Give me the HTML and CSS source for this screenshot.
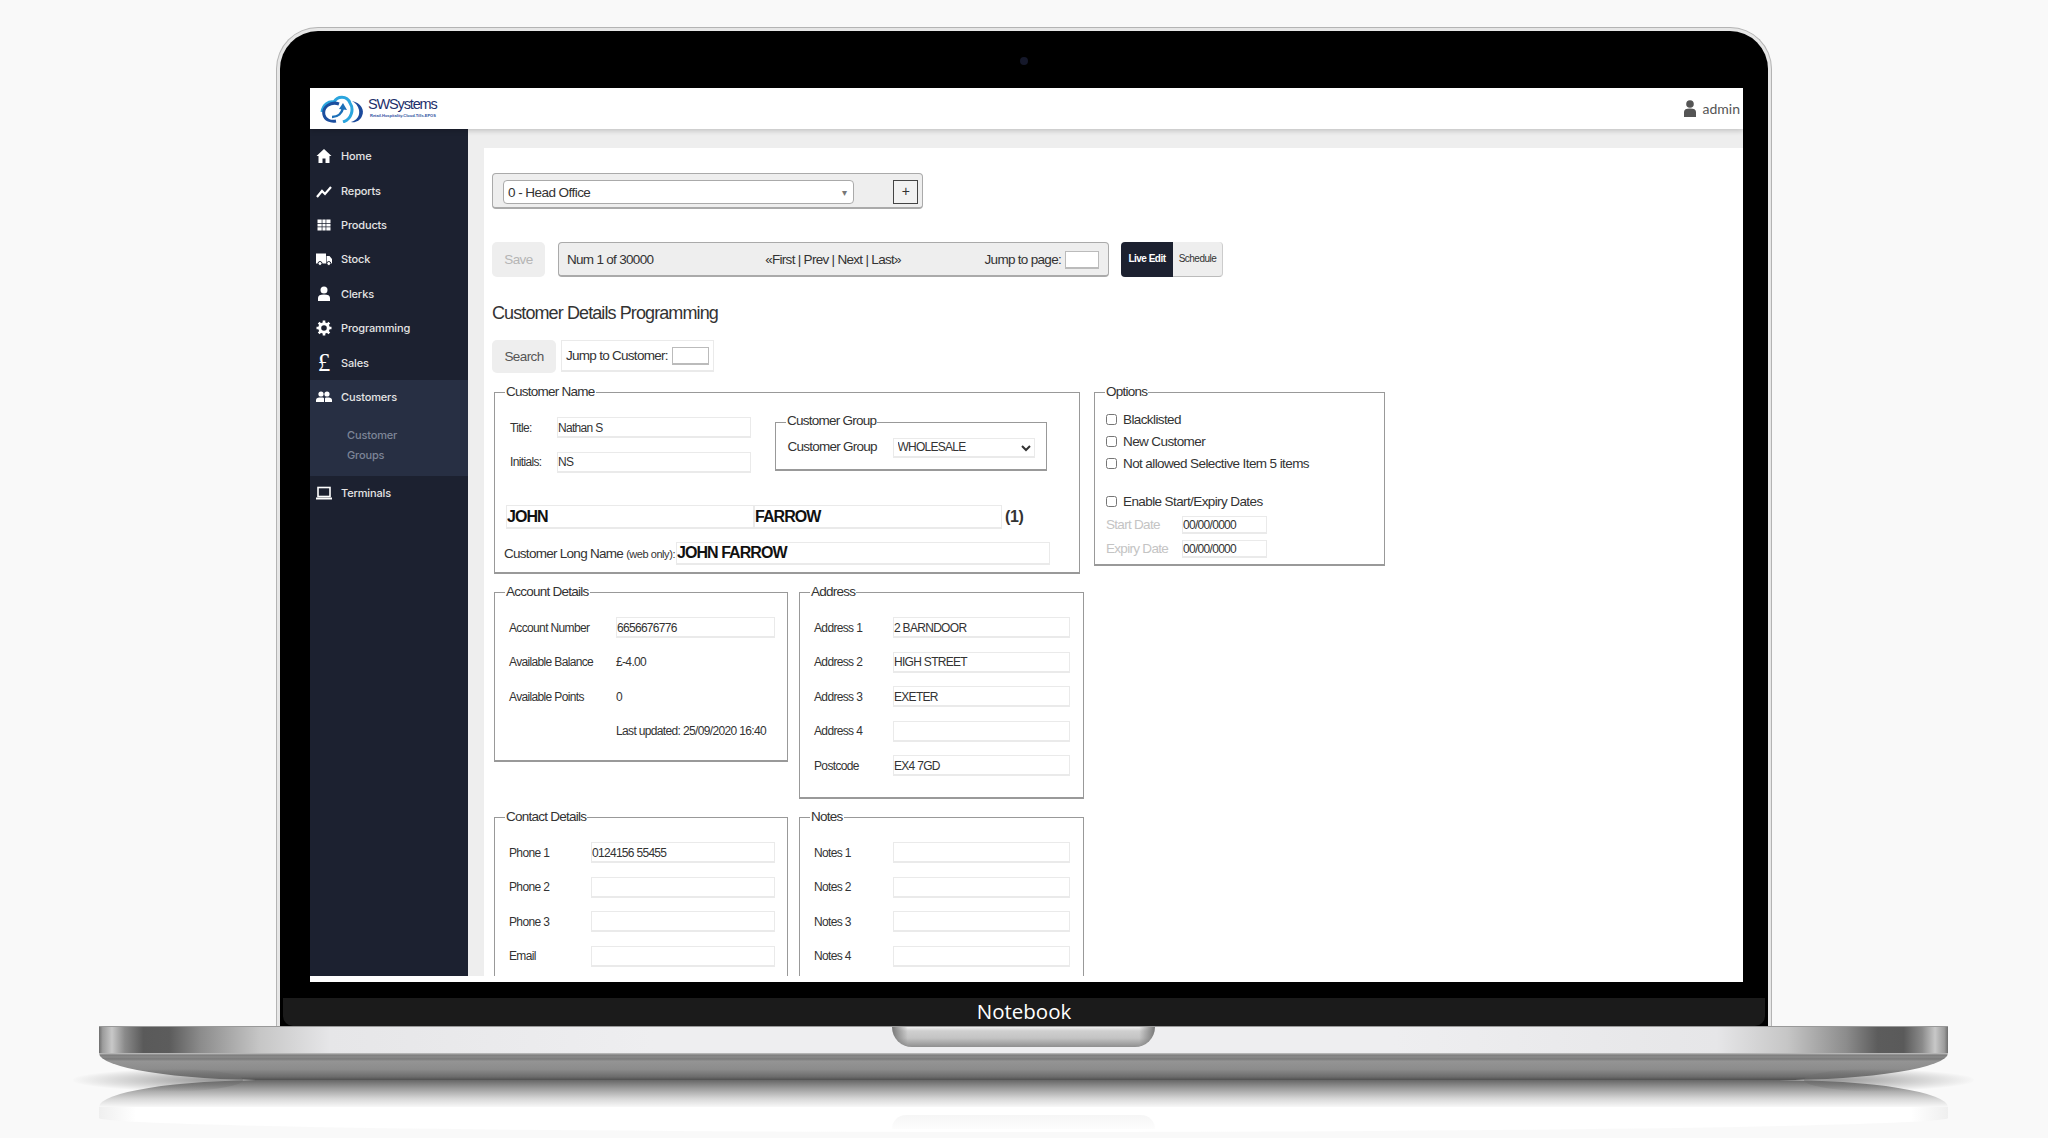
FILE: index.html
```html
<!DOCTYPE html>
<html lang="en">
<head>
    <meta charset="UTF-8">
    <meta name="viewport" content="width=device-width, initial-scale=1.0">
    <title>Customer Details Programming</title>
    <link rel="stylesheet" href="styles.css">
</head>
<body>
    <div class="stage">
        <div class="lid">
            <div class="bezel">
                <div class="camera-row"><span class="camera"></span></div>
                <div class="screen">
                    <div class="topbar">
                        <div class="logo">
                            <svg class="logo-mark" width="48" height="28" viewBox="0 0 48 28">
                                <path d="M3 17C4 9 10 6 15 7C18 1 28 0 31 8C35 14 33 24 24 27" fill="none" stroke="#2ba5de" stroke-width="3"/>
                                <path d="M20 9C12 6 3 12 5 20C6 25 12 27 17 26" fill="none" stroke="#1c4f9f" stroke-width="3"/>
                                <path d="M13 22C19 22 23 18 24 13" fill="none" stroke="#1c6fb8" stroke-width="2.5"/>
                                <path d="M24 8L28 15L20 14Z" fill="#1c6fb8"/>
                                <path d="M33 6C42 8 46 15 43 21C41 26 36 28 32 27C38 25 41 21 40 15C39 11 37 8 33 6Z" fill="#1b4a9c"/>
                            </svg>
                            <div class="logo-text">
                                <div class="logo-name">SWSystems</div>
                                <div class="logo-tag">Retail.Hospitality.Cloud.Tills.EPOS</div>
                            </div>
                        </div>
                        <div class="user">
                            <svg width="12" height="17" viewBox="0 0 12 17"><circle cx="6" cy="4" r="3.8" fill="#555"/><path d="M0 17V12C0 9.500 2 8.500 6 8.500S12 9.500 12 12V17Z" fill="#555"/></svg>
                            <span>admin</span>
                        </div>
                    </div>
                    <div class="app">
                        <div class="sidebar">
                            <div class="nav-item">
                                <svg class="nav-icon" viewBox="0 0 16 16"><path d="M8 1L0.500 8H2.500V15H6.500V10.500H9.500V15H13.500V8H15.500Z"/></svg>Home
                            </div>
                            <div class="nav-item">
                                <svg class="nav-icon" viewBox="0 0 16 16"><path d="M1 14L6 8L9 11L15 4" fill="none" stroke="#fff" stroke-width="2.200"/></svg>Reports
                            </div>
                            <div class="nav-item">
                                <svg class="nav-icon" viewBox="0 0 16 16"><path d="M1.500 2.500H5.700V6H1.500ZM6.400 2.500H9.600V6H6.400ZM10.300 2.500H14.500V6H10.300ZM1.500 6.700H5.700V9.600H1.500ZM6.400 6.700H9.600V9.600H6.400ZM10.300 6.700H14.500V9.600H10.300ZM1.500 10.300H5.700V13.500H1.500ZM6.400 10.300H9.600V13.500H6.400ZM10.300 10.300H14.500V13.500H10.300Z"/></svg>Products
                            </div>
                            <div class="nav-item">
                                <svg class="nav-icon" viewBox="0 0 16 16"><path d="M0 2.500H10V12.500H0ZM10.600 5H13.500L16 8V12.500H10.600Z"/><circle cx="4" cy="12.500" r="2" stroke="#1c2130"/><circle cx="12.800" cy="12.500" r="2" stroke="#1c2130"/></svg>Stock
                            </div>
                            <div class="nav-item">
                                <svg class="nav-icon" viewBox="0 0 16 16"><circle cx="8" cy="4" r="3.500"/><path d="M2 15V12C2 9.500 4 8.500 8 8.500S14 9.500 14 12V15Z"/></svg>Clerks
                            </div>
                            <div class="nav-item">
                                <svg class="nav-icon" viewBox="0 0 16 16">
                                    <circle cx="8" cy="8" r="4.300" fill="none" stroke="#fff" stroke-width="3"/>
                                    <path d="M8 0.500V15.500M0.500 8H15.500M2.700 2.700L13.300 13.300M13.300 2.700L2.700 13.300" stroke="#fff" stroke-width="2.600" stroke-dasharray="3 9.200"/>
                                </svg>Programming
                            </div>
                            <div class="nav-item">
                                <span class="nav-icon pound">£</span>Sales
                            </div>
                            <div class="nav-group">
                                <div class="nav-item">
                                    <svg class="nav-icon" viewBox="0 0 16 16"><circle cx="5" cy="5" r="2.600"/><circle cx="11" cy="5" r="2.600"/><path d="M0 13V11C0 9 2 8.500 5 8.500S8 9 8 9.500V13ZM9 13V9.500C9 9 9.500 8.500 11 8.500C14 8.500 16 9 16 11V13Z"/></svg>Customers
                                </div>
                                <div class="nav-sub">Customer<br>Groups</div>
                            </div>
                            <div class="nav-item">
                                <svg class="nav-icon" viewBox="0 0 16 16"><rect x="2" y="2.500" width="12" height="9" fill="none" stroke="#fff" stroke-width="1.600"/><path d="M0 12.500H16V14.500H0Z"/></svg>Terminals
                            </div>
                        </div>
                        <div class="content">
                            <div class="panel">
                                <div class="store-box">
                                    <div class="store-select"><span>0 - Head Office</span><span class="store-arrow">▾</span></div>
                                    <div class="store-add">+</div>
                                </div>

                                <div class="toolbar">
                                    <button class="btn-grey btn-save">Save</button>
                                    <div class="pager">
                                        <span class="pager-num">Num 1 of 30000</span>
                                        <span class="pager-links">«First | Prev | Next | Last»</span>
                                        <span class="pager-jump">Jump to page: <input type="text" class="small-input"></span>
                                    </div>
                                    <div class="mode-tabs">
                                        <div class="mode-tab active">Live Edit</div>
                                        <div class="mode-tab">Schedule</div>
                                    </div>
                                </div>

                                <h2 class="page-title">Customer Details Programming</h2>

                                <div class="search-row">
                                    <button class="btn-grey btn-search">Search</button>
                                    <div class="jump-box">Jump to Customer: <input type="text" class="small-input"></div>
                                </div>

                                <div class="form-row first">
                                    <fieldset class="box box-name">
                                        <legend>Customer Name</legend>
                                        <div class="name-top">
                                            <div class="name-fields">
                                                <div class="field"><label class="w-title">Title:</label><input type="text" class="in-title" value="Nathan S"></div>
                                                <div class="field"><label class="w-title">Initials:</label><input type="text" class="in-title" value="NS"></div>
                                            </div>
                                            <fieldset class="box box-group">
                                                <legend>Customer Group</legend>
                                                <div class="group-row">
                                                    <label class="w-group">Customer Group</label>
                                                    <select class="group-select"><option>WHOLESALE</option></select>
                                                </div>
                                            </fieldset>
                                        </div>
                                        <div class="name-row">
                                            <input type="text" class="in-name" value="JOHN">
                                            <input type="text" class="in-name" value="FARROW">
                                            <span class="name-count">(1)</span>
                                        </div>
                                        <div class="long-row">
                                            <label class="w-long">Customer Long Name <small>(web only):</small></label>
                                            <input type="text" class="in-long" value="JOHN FARROW">
                                        </div>
                                    </fieldset>

                                    <fieldset class="box box-options">
                                        <legend>Options</legend>
                                        <label class="check"><input type="checkbox">Blacklisted</label>
                                        <label class="check"><input type="checkbox">New Customer</label>
                                        <label class="check"><input type="checkbox">Not allowed Selective Item 5 items</label>
                                        <label class="check check-gap"><input type="checkbox">Enable Start/Expiry Dates</label>
                                        <div class="date-row"><label>Start Date</label><input type="text" value="00/00/0000"></div>
                                        <div class="date-row"><label>Expiry Date</label><input type="text" value="00/00/0000"></div>
                                    </fieldset>
                                </div>

                                <div class="form-row">
                                    <fieldset class="box box-left box-account">
                                        <legend>Account Details</legend>
                                        <div class="field"><label class="w-account">Account Number</label><input type="text" class="in-account" value="6656676776"></div>
                                        <div class="field"><label class="w-account">Available Balance</label><span>£-4.00</span></div>
                                        <div class="field"><label class="w-account">Available Points</label><span>0</span></div>
                                        <div class="field"><label class="w-account"></label><span>Last updated: 25/09/2020 16:40</span></div>
                                    </fieldset>
                                    <fieldset class="box box-right box-address">
                                        <legend>Address</legend>
                                        <div class="field"><label class="w-right">Address 1</label><input type="text" class="in-right" value="2 BARNDOOR"></div>
                                        <div class="field"><label class="w-right">Address 2</label><input type="text" class="in-right" value="HIGH STREET"></div>
                                        <div class="field"><label class="w-right">Address 3</label><input type="text" class="in-right" value="EXETER"></div>
                                        <div class="field"><label class="w-right">Address 4</label><input type="text" class="in-right"></div>
                                        <div class="field"><label class="w-right">Postcode</label><input type="text" class="in-right" value="EX4 7GD"></div>
                                    </fieldset>
                                </div>

                                <div class="form-row">
                                    <fieldset class="box box-left box-tall">
                                        <legend>Contact Details</legend>
                                        <div class="field"><label class="w-contact">Phone 1</label><input type="text" class="in-contact" value="0124156 55455"></div>
                                        <div class="field"><label class="w-contact">Phone 2</label><input type="text" class="in-contact"></div>
                                        <div class="field"><label class="w-contact">Phone 3</label><input type="text" class="in-contact"></div>
                                        <div class="field"><label class="w-contact">Email</label><input type="text" class="in-contact"></div>
                                    </fieldset>
                                    <fieldset class="box box-right box-tall">
                                        <legend>Notes</legend>
                                        <div class="field"><label class="w-right">Notes 1</label><input type="text" class="in-right"></div>
                                        <div class="field"><label class="w-right">Notes 2</label><input type="text" class="in-right"></div>
                                        <div class="field"><label class="w-right">Notes 3</label><input type="text" class="in-right"></div>
                                        <div class="field"><label class="w-right">Notes 4</label><input type="text" class="in-right"></div>
                                    </fieldset>
                                </div>
                            </div>
                        </div>
                    </div>
                </div>
                <div class="screen-gap"></div>
                <div class="chin">Notebook</div>
            </div>
        </div>

        <div class="base">
            <div class="base-shadow left"></div>
            <div class="base-shadow right"></div>
            <div class="base-top"><div class="notch"></div></div>
            <div class="base-lower"></div>
            <div class="base-reflect"></div>
            <div class="base-reflect-top"><div class="notch-reflect"></div></div>
        </div>
    </div>
</body>
</html>
```

FILE: styles.css
```css
* {
    box-sizing: border-box;
}
body {
    margin: 0;
    background: #f9f9f9;
    font-family: "Liberation Sans", Arial, sans-serif;
    color: #333;
    overflow: hidden;
}
.stage {
    width: 2048px;
    height: 1138px;
    padding-top: 27px;
    display: flex;
    flex-direction: column;
    align-items: center;
    overflow: hidden;
}

/* laptop lid */
.lid {
    width: 1496px;
    height: 999px;
    padding: 3px 3px 0;
    background: #e6e6e6;
    border: 1px solid #b4b4b4;
    border-bottom: none;
    border-radius: 42px 42px 0 0;
}
.bezel {
    height: 100%;
    background: #000;
    border-radius: 38px 38px 0 0;
    overflow: hidden;
    padding: 0 25px 0 30px;
}
.camera-row {
    height: 57px;
    display: flex;
    justify-content: center;
    padding: 26px 5px 0 0;
}
.camera {
    width: 8px;
    height: 8px;
    border-radius: 50%;
    background: #15182a;
}
.screen {
    height: 894px;
    background: #fff;
    display: flex;
    flex-direction: column;
}
.screen-gap {
    height: 16px;
}
.chin {
    height: 28px;
    margin: 0 -22px 0 -27px;
    background: #1b1b1b;
    border-radius: 0 0 10px 10px;
    color: #fff;
    font-family: "Open Sans", sans-serif;
    font-size: 20.5px;
    line-height: 27px;
    text-align: center;
}

/* app header */
.topbar {
    height: 41px;
    flex: none;
    display: flex;
    justify-content: space-between;
    align-items: center;
    padding: 0 3px 0 9px;
    background: #fff;
    box-shadow: 0 2px 5px rgba(0,0,0,0.18);
    position: relative;
}
.logo {
    display: flex;
    align-items: center;
    gap: 1px;
}
.logo-text {
    margin-top: -2px;
}
.logo-name {
    font-size: 14.5px;
    line-height: 17px;
    letter-spacing: -1.15px;
    color: #1d2f6b;
}
.logo-tag {
    font-size: 4px;
    line-height: 6px;
    font-weight: bold;
    color: #2c4fa0;
    margin-left: 2px;
    white-space: nowrap;
}
.user {
    display: flex;
    align-items: center;
    gap: 7px;
    font-family: Lato, sans-serif;
    font-size: 14px;
    color: #555;
}

.app {
    height: 847px;
    flex: none;
    display: flex;
    overflow: hidden;
}

/* sidebar */
.sidebar {
    width: 158px;
    flex: none;
    padding-top: 10px;
    background: #1c2130;
    color: #e4e4e4;
    font-family: Inter, sans-serif;
    font-size: 11px;
    font-weight: 500;
    letter-spacing: -0.15px;
}
.nav-item {
    height: 34.4px;
    display: flex;
    align-items: center;
    padding-left: 6px;
}
.nav-icon {
    width: 16px;
    height: 16px;
    margin-right: 9px;
    fill: #fff;
    flex: none;
}
.pound {
    font-family: "Liberation Serif", serif;
    font-size: 25px;
    line-height: 16px;
    color: #fff;
    text-align: center;
}
.nav-group {
    height: 96px;
    background: #272f43;
}
.nav-sub {
    padding: 11px 0 0 37px;
    line-height: 20px;
    color: #7d8597;
}

/* main area */
.content {
    flex: 1;
    background: #eee;
    padding: 19px 0 0 16px;
    min-width: 0;
}
.panel {
    height: 100%;
    background: #fff;
    padding: 25px 0 0 8px;
    overflow: hidden;
    font-size: 12px;
    letter-spacing: -0.65px;
}
input, select, button {
    font-family: inherit;
    letter-spacing: inherit;
    color: #333;
    margin: 0;
}
input[type="text"] {
    height: 21px;
    padding: 1px 0 0;
    font-size: 12px;
    letter-spacing: -0.7px;
    background: #fff;
    border: 2px solid #eaeaea;
    border-width: 1px 1px 2px 1px;
    outline: none;
}

.store-box {
    width: 431px;
    height: 36px;
    padding: 6px 4px 0 10px;
    display: flex;
    justify-content: space-between;
    background: #eee;
    border: 1px solid #aaa;
    border-bottom-width: 2px;
    border-radius: 4px;
}
.store-select {
    width: 351px;
    height: 24px;
    padding: 0 6px 0 4px;
    display: flex;
    justify-content: space-between;
    align-items: center;
    background: #fff;
    border: 1px solid #aaa;
    border-radius: 4px;
    font-size: 13.5px;
    letter-spacing: -0.55px;
}
.store-arrow {
    font-size: 10px;
    color: #777;
    padding-right: 1px;
}
.store-add {
    width: 25px;
    height: 24px;
    background: #f2f2f2;
    border: 1px solid #444;
    text-align: center;
    font-size: 14px;
    line-height: 21px;
}

.toolbar {
    margin-top: 33px;
    height: 35px;
    display: flex;
}
.btn-grey {
    background: #eee;
    border: none;
    border-radius: 5px;
    font-size: 13.5px;
    letter-spacing: -0.6px;
}
.btn-save {
    width: 53px;
    color: #b5b5b5;
}
.pager {
    width: 551px;
    margin-left: 13px;
    padding: 1px 9px 0 8px;
    display: grid;
    grid-template-columns: 1fr auto 1fr;
    align-items: center;
    background: #eee;
    border: 1px solid #aaa;
    border-bottom-width: 2px;
    border-radius: 4px;
    font-size: 13.5px;
    letter-spacing: -0.7px;
}
.pager-jump {
    display: flex;
    align-items: center;
    justify-content: flex-end;
    gap: 4px;
}
input[type="text"].small-input {
    width: 34px;
    height: 18px;
    border: 1px solid #bbb;
    border-bottom-width: 2px;
}
.mode-tabs {
    margin-left: 12px;
    display: flex;
    font-size: 10px;
    letter-spacing: -0.5px;
}
.mode-tab {
    width: 50px;
    line-height: 33px;
    text-align: center;
    background: #eee;
    border-radius: 0 4px 4px 0;
    border-bottom: 1px solid #bbb;
    border-right: 1px solid #ccc;
}
.mode-tab.active {
    width: 52px;
    background: #1c2130;
    color: #fff;
    font-weight: bold;
    border-radius: 4px 0 0 4px;
    border: none;
}

.page-title {
    margin: 24px 0 15px;
    font-size: 18px;
    line-height: 24px;
    font-weight: normal;
    letter-spacing: -0.9px;
}

.search-row {
    height: 33px;
    display: flex;
    gap: 5px;
}
.btn-search {
    width: 64px;
    color: #555;
}
.jump-box {
    width: 153px;
    height: 32px;
    padding-left: 4px;
    display: flex;
    align-items: center;
    gap: 4px;
    border: 1px solid #eaeaea;
    border-bottom-width: 2px;
    font-size: 13.5px;
    letter-spacing: -0.72px;
}
.jump-box input[type="text"].small-input {
    width: 37px;
}

/* fieldsets */
.form-row {
    display: flex;
    align-items: flex-start;
    margin: 10.5px 0 0 2px;
    gap: 11px;
}
.form-row.first {
    margin-top: 11.5px;
    gap: 14px;
}
.box {
    margin: 0;
    padding: 0;
    min-width: 0;
    border: 1px solid #999;
    border-bottom-width: 2px;
}
.box legend {
    margin-left: 10px;
    padding: 0 1px 2px;
    font-size: 13.5px;
    line-height: 14px;
    letter-spacing: -0.75px;
}
.box-name {
    width: 586px;
    height: 189.5px;
    padding-top: 10px;
}
.box-options {
    width: 291px;
    height: 181.5px;
    padding: 8px 0 0 11px;
}
.box-options legend {
    margin-left: -1px;
}
.box-left {
    width: 294px;
    padding: 10px 0 0 14px;
}
.box-right {
    width: 285px;
    padding: 10px 0 0 14px;
}
.box-left legend, .box-right legend {
    margin-left: -4px;
}
.box-account {
    height: 177.5px;
}
.box-address {
    height: 214.5px;
}
.box-tall {
    height: 260px;
}

.field {
    height: 34.5px;
    display: flex;
    align-items: center;
}
.name-top {
    display: flex;
    height: 70px;
}
.name-fields {
    padding-left: 15px;
}
.w-title {
    width: 47px;
}
.in-title {
    width: 194px;
}
.box-group {
    width: 272px;
    height: 56.5px;
    margin: 3.5px 0 0 24px;
    padding: 7.5px 0 0 11.5px;
}
.box-group legend {
    margin-left: -1.5px;
}
.group-row {
    display: flex;
    align-items: center;
    font-size: 13.5px;
    letter-spacing: -0.75px;
}
.w-group {
    width: 105px;
    padding-bottom: 2px;
}
.group-select {
    width: 142px;
    height: 20px;
    font-size: 12px;
    background: #fff;
    border: 1px solid #eaeaea;
    border-bottom-width: 2px;
    outline: none;
}
.name-row {
    margin-top: 24px;
    padding-left: 11px;
    display: flex;
    align-items: center;
}
input[type="text"].in-name {
    width: 248px;
    height: 24px;
    font-size: 16px;
    font-weight: bold;
    letter-spacing: -0.95px;
    color: #111;
}
.name-count {
    margin-left: 3px;
    font-size: 16px;
    font-weight: bold;
    letter-spacing: -0.4px;
}
.long-row {
    margin-top: 13px;
    padding-left: 9px;
    display: flex;
    align-items: center;
}
.w-long {
    width: 172px;
    font-size: 13.5px;
    letter-spacing: -0.72px;
    white-space: nowrap;
}
.w-long small {
    font-size: 11px;
    letter-spacing: -0.45px;
}
input[type="text"].in-long {
    width: 374px;
    height: 23px;
    font-size: 16px;
    font-weight: bold;
    letter-spacing: -0.95px;
    color: #111;
}

.check {
    height: 22px;
    display: flex;
    align-items: center;
    font-size: 13.5px;
    letter-spacing: -0.6px;
}
.check input {
    width: 11px;
    height: 11px;
    margin: 0 6px 0 0;
}
.check-gap {
    margin-top: 16px;
}
.date-row {
    height: 24px;
    display: flex;
    align-items: center;
    font-size: 13.5px;
    letter-spacing: -0.7px;
    color: #c4c4c4;
}
.date-row label {
    width: 76px;
}
.date-row input[type="text"] {
    width: 85px;
    height: 18px;
}

.w-account {
    width: 107px;
}
.in-account {
    width: 159px;
}
.w-right {
    width: 79px;
}
.in-right {
    width: 177px;
}
.w-contact {
    width: 82px;
}
.in-contact {
    width: 184px;
}

/* laptop base */
.base {
    width: 1849px;
    flex: none;
    margin-left: -1px;
    position: relative;
}
.base-top {
    height: 27px;
    display: flex;
    justify-content: center;
    border-top: 1px solid #999;
    background: linear-gradient(90deg, #6e6e6e 0, #9c9c9c 0.2%, #c8c8c8 0.7%, #8a8a8a 1.4%, #5a5a5a 2.4%, #5c5c5c 3.8%, #8c8c8c 5.5%, #c6c6c6 8.7%, #e6e6e8 12.5%, #eeeef0 30%, #eeeef0 70%, #e6e6e8 87.5%, #c6c6c6 91.3%, #8c8c8c 94.5%, #5c5c5c 96.2%, #5a5a5a 97.6%, #8a8a8a 98.6%, #c8c8c8 99.3%, #9c9c9c 99.8%, #6e6e6e 100%);
}
.notch {
    width: 263px;
    height: 20px;
    border-radius: 0 0 20px 20px;
    background: linear-gradient(90deg, #777 0, rgba(150,150,150,0) 6%, rgba(150,150,150,0) 94%, #777 100%), linear-gradient(180deg, #f0f0f0 0, #cfcfcf 20%, #c4c4c4 55%, #8f8f8f 100%);
}
.base-lower {
    height: 27px;
    border-radius: 0 0 170px 170px / 0 0 27px 27px;
    background: linear-gradient(180deg, #c4c4c4 0, #7e7e7e 8%, #8a8a8a 15%, #7a7a7a 22%, #949494 30%, #8c8c8c 60%, #6c6c6c 88%, #505050 100%);
}
.base-reflect {
    height: 27px;
    border-radius: 170px 170px 0 0 / 27px 27px 0 0;
    background: linear-gradient(180deg, #666 0, #9a9a9a 30%, #d8d8d8 70%, #f8f8f8 100%);
}
.base-reflect-top {
    height: 25px;
    display: flex;
    justify-content: center;
    border-radius: 0 0 50% 50% / 0 0 14px 14px;
    background: linear-gradient(90deg, #efefef 0, #fff 2%, #fff 98%, #efefef 100%);
}
.notch-reflect {
    width: 263px;
    height: 14px;
    margin-top: 8px;
    border-radius: 20px 20px 0 0;
    background: linear-gradient(180deg, #f6f6f6, #fdfdfd);
}
.base-shadow {
    position: absolute;
    top: 42px;
    width: 170px;
    height: 24px;
    border-radius: 50%;
}
.base-shadow.left {
    left: -26px;
    background: radial-gradient(ellipse at 85% 50%, rgba(110,110,110,0.7), rgba(249,249,249,0) 72%);
}
.base-shadow.right {
    right: -26px;
    background: radial-gradient(ellipse at 15% 50%, rgba(110,110,110,0.7), rgba(249,249,249,0) 72%);
}
```
